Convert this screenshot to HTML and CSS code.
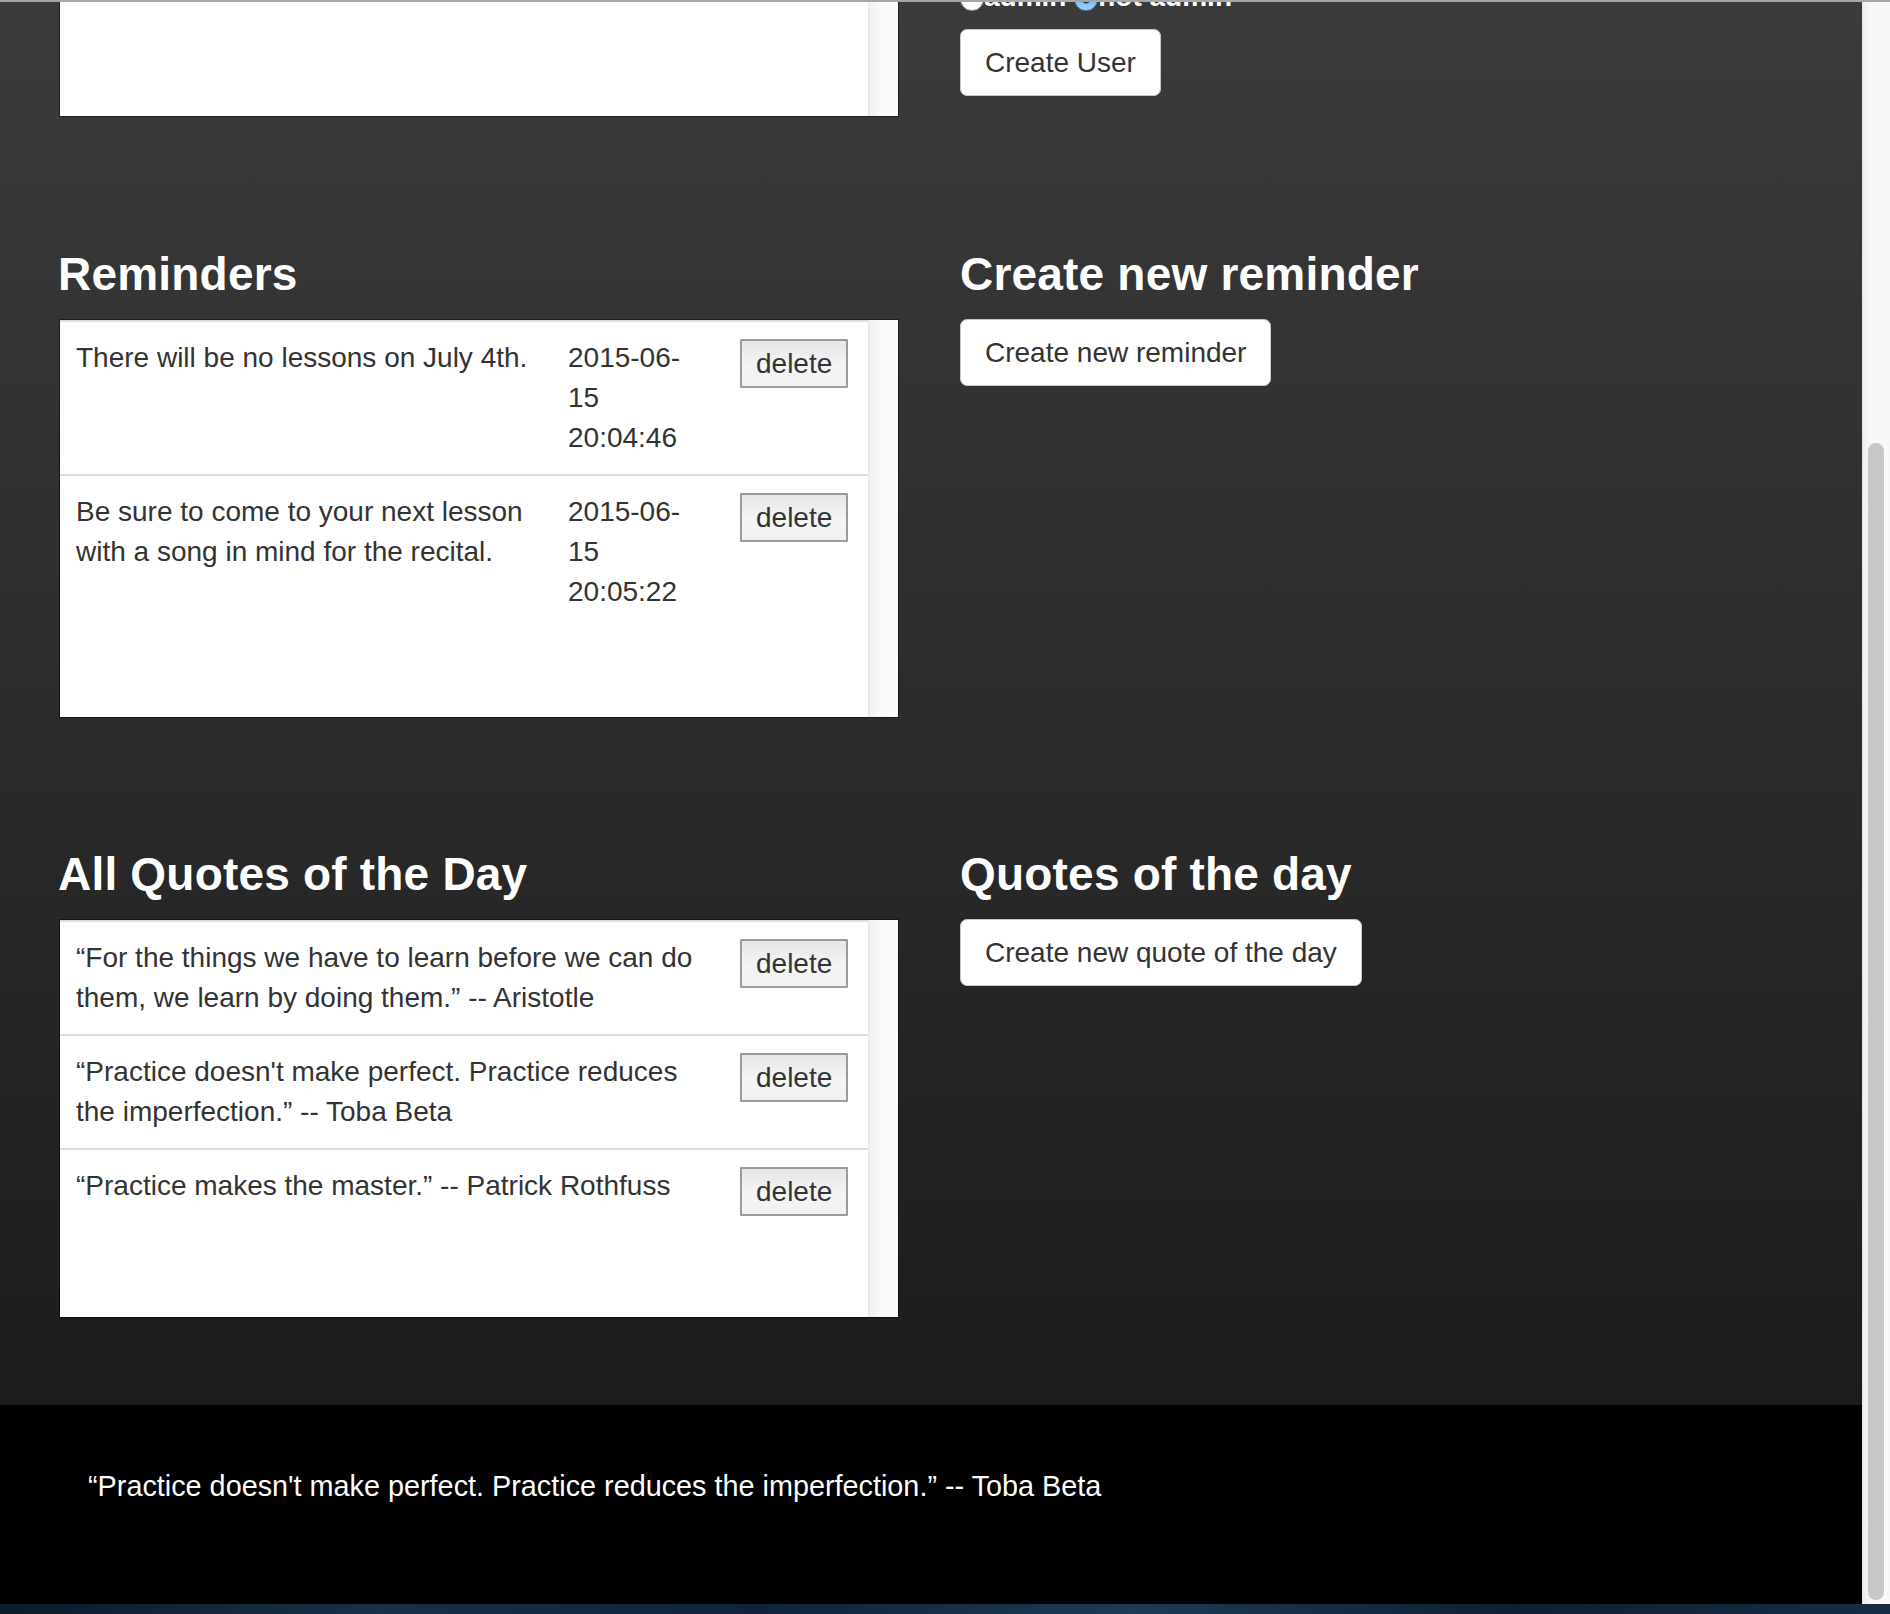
FILE: index.html
```html
<!DOCTYPE html>
<html lang="en">
<head>
<meta charset="utf-8">
<title>Admin</title>
<link rel="stylesheet" href="styles.css">
</head>
<body>
<div class="window">
  <div class="viewport">
    <main class="main">
      <div class="content">
        <section class="row row-top">
          <div class="col-left">
            <div class="list-box list-box-short">
              <div class="list-scroll"></div>
              <div class="list-track"></div>
            </div>
          </div>
          <div class="col-right">
            <div class="role-line"><input type="radio" name="role" class="radio">admin <input type="radio" name="role" class="radio" checked>not admin</div>
            <button class="btn btn-first">Create User</button>
          </div>
        </section>

        <section class="row row-reminders">
          <div class="col-left">
            <h2 class="section-title">Reminders</h2>
            <div class="list-box">
              <div class="list-scroll">
                <table class="list-table">
                  <colgroup><col class="c-text-narrow"><col class="c-date"><col class="c-action"></colgroup>
                  <tr>
                    <td>There will be no lessons on July 4th.</td>
                    <td>2015-06-<wbr>15 20:04:46</td>
                    <td><button class="btn-delete">delete</button></td>
                  </tr>
                  <tr>
                    <td>Be sure to come to your next lesson with a song in mind for the recital.</td>
                    <td>2015-06-<wbr>15 20:05:22</td>
                    <td><button class="btn-delete">delete</button></td>
                  </tr>
                </table>
              </div>
              <div class="list-track"></div>
            </div>
          </div>
          <div class="col-right">
            <h2 class="section-title">Create new reminder</h2>
            <button class="btn">Create new reminder</button>
          </div>
        </section>

        <section class="row row-quotes">
          <div class="col-left">
            <h2 class="section-title">All Quotes of the Day</h2>
            <div class="list-box">
              <div class="list-scroll">
                <table class="list-table">
                  <colgroup><col class="c-text-wide"><col class="c-action"></colgroup>
                  <tr>
                    <td>“For the things we have to learn before we can do them, we learn by doing them.” -- Aristotle</td>
                    <td><button class="btn-delete">delete</button></td>
                  </tr>
                  <tr>
                    <td>“Practice doesn't make perfect. Practice reduces the imperfection.” -- Toba Beta</td>
                    <td><button class="btn-delete">delete</button></td>
                  </tr>
                  <tr>
                    <td>“Practice makes the master.” -- Patrick Rothfuss</td>
                    <td><button class="btn-delete">delete</button></td>
                  </tr>
                </table>
              </div>
              <div class="list-track"></div>
            </div>
          </div>
          <div class="col-right">
            <h2 class="section-title">Quotes of the day</h2>
            <button class="btn">Create new quote of the day</button>
          </div>
        </section>
      </div>
    </main>
    <footer class="footer">“Practice doesn't make perfect. Practice reduces the imperfection.” -- Toba Beta</footer>
  </div>
  <div class="scrollbar"><div class="thumb"></div></div>
</div>
<div class="desktop"></div>
<div class="frame-line"></div>
</body>
</html>
```

FILE: styles.css
```css
html, body {
  margin: 0;
  padding: 0;
}

body {
  position: relative;
  width: 1890px;
  height: 1614px;
  overflow: hidden;
  background: #0f1f30;
  font-family: "Liberation Sans", Arial, Helvetica, sans-serif;
}

.window {
  display: flex;
  height: 1604px;
}

.viewport {
  width: 1862px;
  flex: none;
  display: flex;
  flex-direction: column;
  overflow: hidden;
}

.main {
  overflow: hidden;
  padding-bottom: 88px;
  background: linear-gradient(to bottom, #3b3b3b, #1c1c1c);
}

.content {
  margin-top: -23px;
}

.row {
  display: flex;
  gap: 62px;
  padding-left: 60px;
}

.row-reminders {
  margin-top: 133px;
}

.row-quotes {
  margin-top: 132px;
}

.col-left {
  width: 838px;
  flex: none;
}

.col-right {
  flex: 1;
}

.section-title {
  margin: 0 0 20px;
  font-size: 46px;
  line-height: 50px;
  font-weight: bold;
  color: #fff;
  letter-spacing: 0.2px;
}

.col-left .section-title {
  margin-left: -2px;
  margin-bottom: 21px;
}

.list-box {
  display: flex;
  height: 397px;
  background: #fff;
  box-shadow: 0 0 0 1px rgba(0, 0, 0, 0.45);
}

.list-box-short {
  height: 139px;
}

.list-scroll {
  flex: 1;
  overflow: hidden;
}

.list-track {
  width: 29px;
  flex: none;
  border-left: 1px solid #e3e3e3;
  background: linear-gradient(to right, #efefef, #f9f9f9 35%, #fafafa);
}

.list-table {
  width: 808px;
  table-layout: fixed;
  border-collapse: separate;
  border-spacing: 0;
  font-size: 28px;
  line-height: 40px;
  color: #333;
}

.c-text-narrow { width: 492px; }
.c-text-wide { width: 664px; }
.c-date { width: 172px; }
.c-action { width: 144px; }

.list-table td {
  padding: 16px;
  border-top: 2px solid #dddddd;
  vertical-align: top;
}

.btn-delete {
  display: block;
  height: 49px;
  margin-top: 1px;
  padding: 0 14px;
  font-family: "Liberation Sans", Arial, Helvetica, sans-serif;
  font-size: 28px;
  line-height: 1;
  color: #333;
  border: 2px solid #9b9b9b;
  border-radius: 1px;
  background: linear-gradient(to bottom, #e6e6e6, #f4f4f4 55%, #f1f1f1);
}

.role-line {
  font-size: 28px;
  line-height: 40px;
  font-weight: bold;
  color: #fff;
  white-space: nowrap;
}

.radio {
  -webkit-appearance: none;
  appearance: none;
  width: 24px;
  height: 24px;
  margin: 0;
  border-radius: 50%;
  vertical-align: middle;
  border: 1px solid #9a9a9a;
  background: linear-gradient(to bottom, #f2f2f2, #ffffff);
}

.radio:checked {
  border-color: #4a7fb5;
  background:
    radial-gradient(circle, #1d3d66 0 4px, transparent 5px),
    linear-gradient(to bottom, #4d9be8, #9fd2fb);
}

.btn {
  display: block;
  width: fit-content;
  padding: 13px 24px 12px;
  font-family: "Liberation Sans", Arial, Helvetica, sans-serif;
  font-size: 28px;
  line-height: 40px;
  color: #333;
  background: #fff;
  border: 1px solid #c8c8c8;
  border-radius: 7px;
}

.btn-first {
  margin-top: 12px;
}

.footer {
  height: 199px;
  box-sizing: border-box;
  padding: 61px 0 0 88px;
  background: #000;
  color: #fff;
  font-size: 28.8px;
  line-height: 40px;
}

.scrollbar {
  width: 28px;
  flex: none;
  box-sizing: border-box;
  padding: 443px 0 0 5px;
  border-left: 1px solid #e4e4e4;
  background: linear-gradient(to right, #eeeeee, #f8f8f8 30%, #f8f8f8);
}

.thumb {
  width: 16px;
  height: 1157px;
  border-radius: 8px;
  background: #c7c7c7;
}

.desktop {
  height: 10px;
  background: linear-gradient(to right, #0d1b2b, #1a3047 20%, #10233a 40%, #1f3a56 60%, #0f2034 80%, #172c44);
}

.frame-line {
  position: absolute;
  top: 0;
  left: 0;
  right: 0;
  height: 2px;
  background: #a6a6a6;
}
```
